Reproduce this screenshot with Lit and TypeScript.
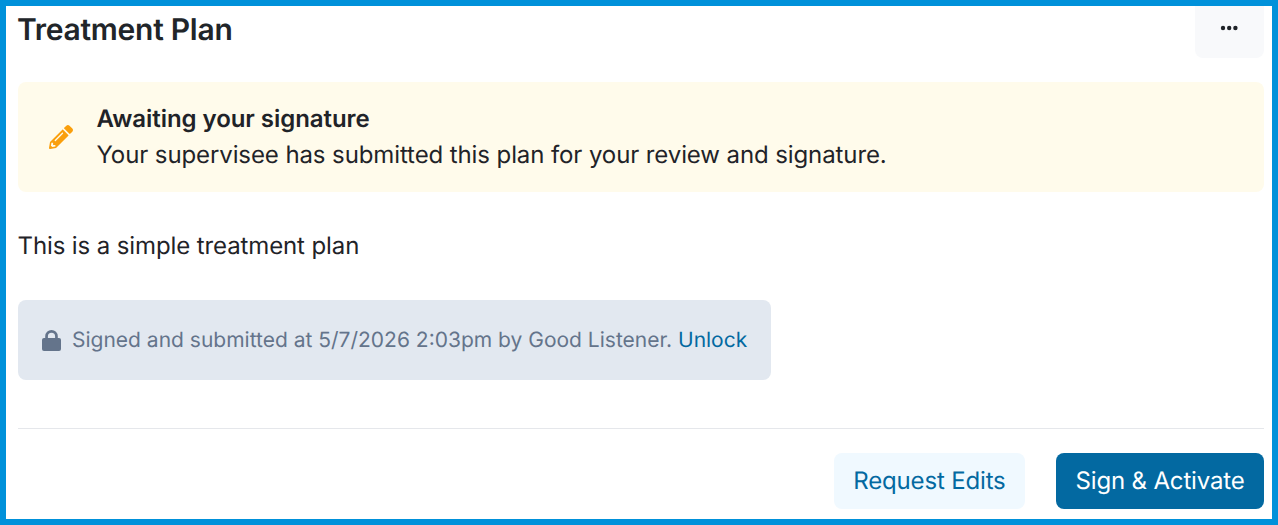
import { LitElement, html, css } from "lit";
import { customElement } from "lit/decorators.js";

@customElement("app-root")
export class AppRoot extends LitElement {
  static styles = css`
    :host {
      display: block;
      box-sizing: border-box;
      height: 525px;
      border: 6px solid #0091da;
      overflow: hidden;
      background: #fff;
      font-family: Inter, "Liberation Sans", sans-serif;
      color: #1f2328;
      text-rendering: geometricPrecision;
    }
    .panel {
      display: flex;
      flex-direction: column;
      padding: 0 8px 0 12px;
    }
    .header {
      display: flex;
      justify-content: space-between;
      align-items: flex-start;
      height: 76px;
    }
    h1 {
      margin: 0 0 0 -1px;
      font-size: 30px;
      letter-spacing: -0.27px;
      line-height: 48px;
      font-weight: 600;
      color: #212529;
    }
    .more {
      width: 69px;
      height: 52px;
      border: 0;
      padding: 0 2px 8px 0;
      border-radius: 0 0 8px 8px;
      background: #f8f9fb;
      display: flex;
      align-items: center;
      justify-content: center;
    }
    .banner {
      display: flex;
      align-items: center;
      gap: 23.5px;
      height: 110px;
      box-sizing: border-box;
      padding-left: 31px;
      background: #fffbeb;
      border-radius: 8px;
      font-size: 24px;
      letter-spacing: -0.1px;
      line-height: 36px;
    }
    .banner b {
      display: block;
      font-weight: 600;
      letter-spacing: -0.05px;
    }
    .body {
      margin: 36px 0 0 -0.5px;
      font-size: 24px;
      letter-spacing: -0.11px;
      line-height: 36px;
    }
    .signed {
      margin-top: 36px;
      align-self: flex-start;
      display: flex;
      align-items: center;
      gap: 11px;
      height: 80px;
      box-sizing: border-box;
      padding: 0 24px;
      background: #e2e8f0;
      border-radius: 8px;
      font-size: 21px;
      color: #64748b;
    }
    .signed a {
      color: #0369a1;
      text-decoration: none;
    }
    hr {
      width: 100%;
      margin: 48px 0 0;
      border: 0;
      border-top: 1px solid #e5e7eb;
    }
    .actions {
      display: flex;
      justify-content: flex-end;
      gap: 31px;
      margin-top: 24px;
    }
    button.action {
      height: 56px;
      border: 0;
      border-radius: 8px;
      font: 400 24px Inter, "Liberation Sans", sans-serif;
      letter-spacing: -0.17px;
      text-rendering: geometricPrecision;
      padding: 0 19.5px 1px;
    }
    .secondary {
      background: #f0f9ff;
      color: #0369a1;
    }
    .primary {
      background: #0369a1;
      color: #fff;
    }
  `;

  render() {
    return html`
      <div class="panel">
        <div class="header">
          <h1>Treatment Plan</h1>
          <button class="more" aria-label="More">
            <svg width="18" height="6" viewBox="0 0 18 6" fill="#1f2328">
              <circle cx="3" cy="3" r="2.2"></circle>
              <circle cx="9.2" cy="3" r="2.2"></circle>
              <circle cx="15.4" cy="3" r="2.2"></circle>
            </svg>
          </button>
        </div>
        <div class="banner">
          <svg width="24" height="24" viewBox="0 0 512 512" fill="#fa9f0c">
            <path d="M497.9 142.1l-46.1 46.1c-4.7 4.7-12.3 4.7-17 0l-111-111c-4.7-4.7-4.7-12.3 0-17l46.1-46.1c18.7-18.7 49.1-18.7 67.9 0l60.1 60.1c18.8 18.7 18.8 49.1 0 67.9zM284.2 99.8L21.6 362.4.4 483.9c-2.9 16.4 11.4 30.6 27.8 27.8l121.5-21.3 262.6-262.6c4.7-4.7 4.7-12.3 0-17l-111-111c-4.8-4.7-12.4-4.7-17.1 0zM124.1 339.9c-5.5-5.5-5.5-14.3 0-19.8l154-154c5.5-5.5 14.3-5.5 19.8 0s5.5 14.3 0 19.8l-154 154c-5.5 5.5-14.3 5.5-19.8 0zM88 424h48v36.3l-64.5 11.3-31.1-31.1L51.7 376H88v48z"></path>
          </svg>
          <div>
            <b>Awaiting your signature</b>
            Your supervisee has submitted this plan for your review and signature.
          </div>
        </div>
        <p class="body">This is a simple treatment plan</p>
        <div class="signed">
          <svg width="19" height="21" viewBox="0 0 19 21" fill="#64748b">
            <path d="M3.2 9V6.2a6.3 6.2 0 0 1 12.6 0V9h-2.7V6.2a3.6 3.5 0 0 0-7.2 0V9z"></path>
            <rect x="0" y="8" width="19" height="13" rx="2"></rect>
          </svg>
          <span>Signed and submitted at 5/7/2026 2:03pm by Good Listener. <a href="#">Unlock</a></span>
        </div>
        <hr />
        <div class="actions">
          <button class="action secondary">Request Edits</button>
          <button class="action primary">Sign &amp; Activate</button>
        </div>
      </div>
    `;
  }
}
